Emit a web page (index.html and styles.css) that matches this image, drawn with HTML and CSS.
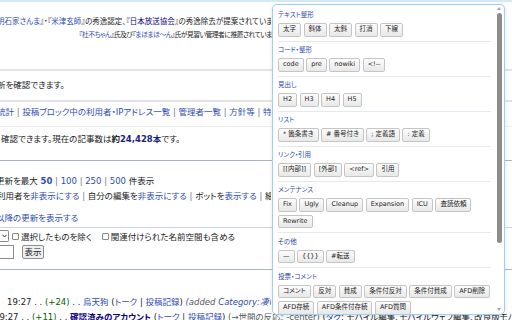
FILE: index.html
```html
<!DOCTYPE html>
<html>
  <head>
    <meta charset="UTF-8" />
    <title>最近の更新 - 編集ツールパレット</title>
    <link rel="stylesheet" href="styles.css">
  </head>
  <body>
    <div class="page">
      <div class="topbar"></div>

      <div class="notice">
        <div class="notice_line clip cut">
          <a class="l">明石家さんま</a>』・『<a class="l">米津玄師</a>』の秀逸認定、『<a class="v">日本放送協会</a>』の秀逸除去が提案されています
        </div>
        <div class="notice_line notice_second">
          『<a class="l">杜不ちゃん</a>』氏及び『<a class="l">まほまほ〜ん</a>』氏が見習い管理者に推薦されています
        </div>
      </div>

      <div class="box_a">
        <div class="line clip cut">新を確認できます。</div>
      </div>

      <div class="portal">
        <div class="line clip cut">
          <a class="l">統計</a> <span class="sep">|</span> <a class="l">投稿ブロック中の利用者・IPアドレス一覧</a> <span class="sep">|</span> <a class="l">管理者一覧</a> <span class="sep">|</span> <a class="l">方針等</a> <span class="sep">|</span> <a class="l">特別ページ</a>
        </div>
      </div>

      <div class="count">
        <div class="line">確認できます。現在の記事数は<b>約</b><b class="num">24,428本</b>です。</div>
      </div>

      <div class="options">
        <div class="opt_line clip cut_more">更新を最大 <b><a class="l">50</a></b> <span class="sep">|</span> <a class="l">100</a> <span class="sep">|</span> <a class="l">250</a> <span class="sep">|</span> <a class="l">500</a> 件表示</div>
        <div class="opt_line clip cut">利用者を<a class="l">非表示にする</a> <span class="sep">|</span> 自分の編集を<a class="l">非表示にする</a> <span class="sep">|</span> ボットを<a class="l">表示する</a> <span class="sep">|</span> 細部の編集を<a class="l">非表示にする</a></div>
        <div class="opt_line opt_from clip cut_more"><a class="l">以降の更新を表示する</a></div>
      </div>

      <div class="filter">
        <div class="filter_row">
          <span class="select">
            <svg width="5" height="4" viewBox="0 0 5 4"><path d="M0.5 0.8 L2.5 3 L4.5 0.8" fill="none" stroke="#333" stroke-width="1"/></svg>
          </span>
          <span class="cb"></span><span class="cb_label">選択したものを除く</span>
          <span class="cb cb_second"></span><span class="cb_label">関連付けられた名前空間も含める</span>
        </div>
        <div class="filter_row filter_submit">
          <span class="input"></span>
          <span class="button">表示</span>
        </div>
      </div>

      <ul class="changes">
        <li class="first clip">19:27 . . <span class="plus">(+24)</span> . . <a class="l">烏天狗</a> (<a class="l">トーク</a> | <a class="l">投稿記録</a>) <i class="comment">(added <a class="l">Category:凄い人物</a>)</i></li>
        <li class="second">19:27 . . <span class="plus">(+11)</span> . . <b><a class="v">確認済みのアカウント</a></b> (<a class="l">トーク</a> | <a class="l">投稿記録</a>) <span class="comment">(→世間の反応: -center)</span> (<a class="l">タグ</a>: モバイル編集、モバイルウェブ編集、改良版モバイル編集)</li>
      </ul>

      <div class="palette">
        <div class="palette_body">
          <div class="group">
            <div class="group_title">テキスト整形</div>
            <div class="btns">
              <span class="btn">太字</span><span class="btn">斜体</span><span class="btn">太斜</span><span class="btn">打消</span><span class="btn">下線</span>
            </div>
          </div>
          <div class="group">
            <div class="group_title">コード・整形</div>
            <div class="btns">
              <span class="btn">code</span><span class="btn">pre</span><span class="btn">nowiki</span><span class="btn">&lt;!--</span>
            </div>
          </div>
          <div class="group">
            <div class="group_title">見出し</div>
            <div class="btns">
              <span class="btn">H2</span><span class="btn">H3</span><span class="btn">H4</span><span class="btn">H5</span>
            </div>
          </div>
          <div class="group">
            <div class="group_title">リスト</div>
            <div class="btns">
              <span class="btn">* 箇条書き</span><span class="btn"># 番号付き</span><span class="btn">; 定義語</span><span class="btn">: 定義</span>
            </div>
          </div>
          <div class="group">
            <div class="group_title">リンク・引用</div>
            <div class="btns">
              <span class="btn">[[内部]]</span><span class="btn">[外部]</span><span class="btn">&lt;ref&gt;</span><span class="btn">引用</span>
            </div>
          </div>
          <div class="group">
            <div class="group_title">メンテナンス</div>
            <div class="btns">
              <span class="btn">Fix</span><span class="btn">Ugly</span><span class="btn">Cleanup</span><span class="btn">Expansion</span><span class="btn">ICU</span><span class="btn">査読依頼</span><span class="btn">Rewrite</span>
            </div>
          </div>
          <div class="group">
            <div class="group_title">その他</div>
            <div class="btns">
              <span class="btn">—</span><span class="btn">{{}}</span><span class="btn">#転送</span>
            </div>
          </div>
          <div class="group">
            <div class="group_title">投票・コメント</div>
            <div class="btns">
              <span class="btn">コメント</span><span class="btn">反対</span><span class="btn">賛成</span><span class="btn">条件付反対</span><span class="btn">条件付賛成</span><span class="btn">AFD削除</span><span class="btn">AFD存続</span><span class="btn">AFD条件付存続</span><span class="btn">AFD質問</span>
            </div>
          </div>
        </div>
        <div class="scrollbar">
          <span class="sb_up"></span>
          <div class="sb_track"><div class="sb_thumb"></div></div>
          <span class="sb_down"></span>
        </div>
      </div>
    </div>
  </body>
</html>
```

FILE: styles.css
```css
body {
  margin: 0;
  background: #fff;
  color: #202122;
  font-family: "DejaVu Sans", "Noto Sans CJK JP", sans-serif;
  font-feature-settings: "palt";
}

a {
  text-decoration: none;
}

.page {
  position: relative;
  overflow: hidden;
  width: 512px;
  height: 320px;
  font-size: 8.5px;
}

.l {
  color: #2f4db3;
}

.v {
  color: #0b0080;
}

.sep {
  color: #72777d;
}

.topbar {
  height: 2px;
  background: #d4e8f8;
}

.line,
.notice_line,
.opt_line,
.changes li {
  white-space: nowrap;
}

/* lines that run on under the palette are cut at its left edge */
.clip {
  overflow: hidden;
  width: 271px;
}

.cut {
  text-indent: -3px;
}

.cut_more {
  text-indent: -4px;
}

/* notice */
.notice {
  padding: 14px 0 28px;
  font-size: 7.5px;
  line-height: 12.5px;
}

.notice_second {
  padding-left: 79px;
  font-size: 6.8px;
  letter-spacing: -0.5px;
}

/* boxes */
.box_a {
  padding: 7px 0 8px;
  border-top: 2px solid #e3e3e3;
  border-bottom: 2px solid #e3e3e3;
  line-height: 14px;
}

.portal {
  padding: 3px 0 7px;
  border-bottom: 1px solid #ececec;
  line-height: 14px;
}

.count {
  padding: 5px 0 14px 1px;
  border-bottom: 1px solid #aab3cc;
  line-height: 14px;
}

.count b {
  font-weight: bold;
}

.count .num {
  color: #1b1f7a;
}

/* options */
.options {
  padding: 12.5px 0 1.5px;
  border-bottom: 1px solid #cdd3e1;
  line-height: 15px;
}

.opt_from {
  margin-top: 7px;
}

.filter {
  padding: 1px 0 10px;
  border-bottom: 1px solid #aab3cc;
}

.filter_row {
  display: flex;
  align-items: center;
  height: 14px;
  white-space: nowrap;
}

.filter_submit {
  margin-top: 2px;
}

.select {
  display: flex;
  align-items: center;
  justify-content: center;
  box-sizing: border-box;
  width: 9px;
  height: 12px;
  border: 1px solid #8a8a8a;
  border-left: none;
  border-radius: 0 2px 2px 0;
}

.cb {
  width: 5px;
  height: 5px;
  margin-left: 3px;
  border: 1px solid #8a8a8a;
  border-radius: 1px;
}

.cb_second {
  margin-left: 10px;
}

.cb_label {
  margin-left: 2px;
}

.input {
  box-sizing: border-box;
  width: 14px;
  height: 14px;
  border: 1px solid #8a8a8a;
  border-left: none;
}

.button {
  box-sizing: border-box;
  height: 14px;
  margin-left: 8px;
  padding: 0 1.5px;
  border: 1px solid #8f8f8f;
  border-radius: 2px;
  background: #efefef;
  line-height: 12px;
}

/* recent changes */
.changes {
  margin: 0;
  padding: 24.5px 0 0;
  list-style: none;
  line-height: 15px;
}

.changes .first {
  padding-left: 7px;
  width: 264px;
}

.changes .second {
  margin-left: -6px;
}

.plus {
  color: #006400;
}

.comment {
  color: #54595d;
}

/* palette */
.palette {
  position: absolute;
  top: 4px;
  left: 272px;
  display: flex;
  box-sizing: border-box;
  overflow: hidden;
  width: 233px;
  height: 311px;
  border: 1px solid #9fcff3;
  border-radius: 5px;
  background: #fff;
  box-shadow: 0 1px 4px rgba(0, 0, 0, 0.12);
}

.palette_body {
  flex: none;
  overflow: hidden;
  width: 213px;
  padding: 0 3px 0 5px;
}

.group {
  padding: 3.5px 0 4px;
  border-bottom: 1px solid #e3e9f0;
}

.group:first-child {
  padding-top: 5px;
}

.group_title {
  height: 10px;
  margin-bottom: 3px;
  color: #2c46b0;
  font-size: 6.5px;
  line-height: 10px;
}

.btns {
  display: flex;
  flex-wrap: wrap;
  gap: 3px 2.5px;
}

.btn {
  box-sizing: border-box;
  height: 13.5px;
  padding: 0 4px;
  border: 1px solid #c5c5c5;
  border-radius: 2px;
  background: linear-gradient(#fcfcfc, #e8e8e8);
  color: #222;
  font-size: 6.5px;
  line-height: 11.5px;
  white-space: nowrap;
}

.scrollbar {
  display: flex;
  flex-direction: column;
  align-items: center;
  width: 10px;
}

.sb_up,
.sb_down {
  width: 0;
  height: 0;
  border-left: 2.5px solid transparent;
  border-right: 2.5px solid transparent;
}

.sb_up {
  margin-top: 2px;
  border-bottom: 3px solid #a3a3a3;
}

.sb_down {
  margin-bottom: 3px;
  border-top: 3px solid #a3a3a3;
}

.sb_track {
  flex: 1;
  padding-top: 3px;
}

.sb_thumb {
  width: 5px;
  height: 230px;
  border-radius: 2.5px;
  background: #8c8c8c;
}
```
